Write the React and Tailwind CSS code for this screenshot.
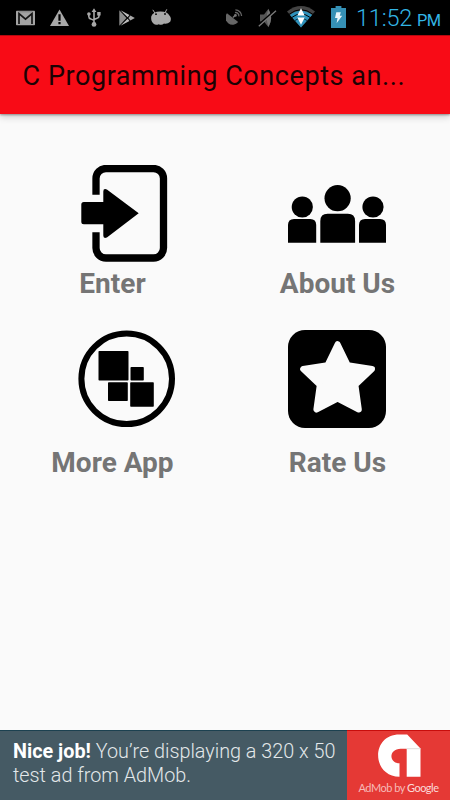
const MENU_ROWS = [
  [
    { label: 'Enter', Icon: EnterIcon, iconClass: 'ml-[27px]' },
    { label: 'About Us', Icon: PeopleIcon, iconClass: 'mr-px' },
  ],
  [
    { label: 'More App', Icon: MoreIcon, iconClass: 'ml-[27px]' },
    { label: 'Rate Us', Icon: RateIcon, iconClass: 'mr-px' },
  ],
]

function EnterIcon() {
  return (
    <svg width="98" height="98" viewBox="0 0 98 98">
      <path
        d="M19 29.7V13.5a10 10 0 0 1 10-10h47.5a10 10 0 0 1 10 10V83a10 10 0 0 1-10 10H29a10 10 0 0 1-10-10V67.3"
        fill="none"
        stroke="#000"
        strokeWidth="7.3"
      />
      <path d="M6.8 37H26.3V26.5q0-3.4 3.6-2L61.7 48.3 29.9 72.5q-3.6 1.6-3.6-2V59.3H6.8q-2.5 0-2.5-2.5V39.5q0-2.5 2.5-2.5z" />
    </svg>
  )
}

function PeopleIcon() {
  return (
    <svg width="98" height="98" viewBox="0 0 98 98">
      <circle cx="14.3" cy="42" r="10.6" />
      <circle cx="49.6" cy="33.2" r="13.1" />
      <circle cx="85" cy="42" r="10.6" />
      <path d="M0 77.7V60q0-6 6-6h16.2q6 0 6 6v17.7z" />
      <path d="M32.3 77.7V56q0-7.3 7.3-7.3h20.2q7.3 0 7.3 7.3v21.7z" />
      <path d="M71 77.7V60q0-6 6-6h15q6 0 6 6v17.7z" />
    </svg>
  )
}

function MoreIcon() {
  return (
    <svg width="98" height="98" viewBox="0 0 98 98">
      <circle cx="49.7" cy="48.8" r="45.3" fill="none" stroke="#000" strokeWidth="6" />
      <rect x="21.5" y="21" width="30" height="29.5" rx="0.8" />
      <rect x="53.5" y="37.1" width="13.3" height="13.4" rx="0.8" />
      <rect x="31" y="52.3" width="19.8" height="18.8" rx="0.8" />
      <rect x="53.2" y="52.3" width="23.6" height="24.4" rx="0.8" />
    </svg>
  )
}

function RateIcon() {
  return (
    <svg width="98" height="98" viewBox="0 0 98 98">
      <rect width="98" height="98" rx="17" />
      <path
        d="M49.6 14.2 59.8 35.3 84 39 67.4 54.8 70.8 79.5 49.6 68.6 28.4 79.5 31.8 54.8 15.2 39 39.4 35.3z"
        fill="#fafafa"
        stroke="#fafafa"
        strokeWidth="6"
        strokeLinejoin="round"
      />
    </svg>
  )
}

function NotificationIcons() {
  return (
    <div className="flex items-center gap-[15px] pl-4">
      <svg width="19" height="16" viewBox="0 0 19 16">
        <rect y="0.7" width="19" height="14.6" rx="0.8" fill="#a3a3a3" />
        <path d="M3 14V3.6l6.5 5.6L16 3.6V14" fill="none" stroke="#141414" strokeWidth="1.7" />
        <path d="M2.5 1.8h14" stroke="#777" strokeWidth="0.8" />
      </svg>
      <svg width="19" height="18" viewBox="0 0 19 18">
        <path d="M9.5 0.6 19 17H0z" fill="#a8a8a8" />
        <path d="M9.5 5.3v6.5M9.5 13v2.3" stroke="#000" strokeWidth="2.2" />
      </svg>
      <svg width="14" height="19" viewBox="0 0 14 19" className="ml-[3px]">
        <path
          d="M7 3v13M1.8 5.5v3q0 2 2 2.4L7 12.4M12 5.5v2.4q0 2-2 2.4L7 11.5"
          fill="none"
          stroke="#a8a8a8"
          strokeWidth="1.6"
        />
        <path d="M7 0.2 9.4 4H4.6zM10.2 4h3.4v3.4h-3.4z" fill="#a8a8a8" />
        <circle cx="1.9" cy="6" r="1.8" fill="#a8a8a8" />
        <circle cx="7" cy="16.4" r="2.4" fill="#a8a8a8" />
      </svg>
      <svg width="16" height="16" viewBox="0 0 16 16" className="ml-[3px]">
        <path d="M0.3 0.2V15.8L7.5 8z" fill="#8e8e8e" />
        <path d="M1.5 0.3 10.5 5 8.6 7.2zM1.5 15.7 10.5 11 8.6 8.8z" fill="#bcbcbc" />
        <path d="M11.4 5.5 15.8 8l-4.4 2.6L9.4 8z" fill="#a8a8a8" />
      </svg>
      <svg width="22" height="17" viewBox="0 0 22 17">
        <path d="M2.8 0.8 5 4.2M16.8 0.3 15 3.8" stroke="#a8a8a8" strokeWidth="1" />
        <path
          d="M1.3 7.2Q3 2.6 10 2.4 17.6 2.2 19.2 6.3 22 9.3 20.2 12.7 17.3 15.5 14 14.6 11.8 16.6 8.7 15.2 5.7 16.8 3.4 14.6 0.4 11.6 1.3 7.2z"
          fill="#a8a8a8"
        />
        <circle cx="6" cy="5.2" r="0.9" />
        <circle cx="15" cy="5" r="0.9" />
      </svg>
    </div>
  )
}

function SystemIcons() {
  return (
    <div className="flex items-center">
      <svg width="17" height="17" viewBox="0 0 17 17" className="mt-px mr-[15px]">
        <path d="M1 4.2 12.2 13A7 7 0 0 1 1 4.2z" fill="#666" />
        <path d="M7 8.5 9 6.5" stroke="#777" strokeWidth="1.4" />
        <circle cx="9.4" cy="6.4" r="1.4" fill="#777" />
        <path d="M9 3.6a3.2 3.2 0 0 1 3.8 3.8M9.4 0.9a6.2 6.2 0 0 1 6.2 6.2" fill="none" stroke="#666" strokeWidth="1.3" />
      </svg>
      <svg width="19" height="20" viewBox="0 0 19 20" className="mt-px mr-[10px]">
        <path d="M2 6.5h4L10.5 0.7q4.6 9.3 0 18.6L6 13.5H2z" fill="#555" />
        <path d="M10.5 1.2q5.4 8.8 0 17.6-3.6-8.8 0-17.6z" fill="#757575" />
        <path d="M0.5 17.2 17.6 1.8" stroke="#000" strokeWidth="2" />
        <path d="M0.8 18.2 18 2.8" stroke="#7b7b7b" strokeWidth="1.3" />
      </svg>
      <svg width="28" height="22" viewBox="0 0 28 22" className="mr-4">
        <path d="M14 21.5 0 5.5Q14-5.3 28 5.5z" fill="#444" />
        <path d="M14 21.5 2.9 8.9Q14 0.6 25.1 8.9z" fill="#2d91bb" />
        <path d="M2.2 8.2Q14-0.8 25.8 8.2M4.8 11.5Q14 4.4 23.2 11.5" fill="none" stroke="#000" strokeWidth="1" />
        <path d="M7.8 14.6Q14 10 20.2 14.6" fill="none" stroke="#05303f" strokeWidth="1" />
        <path d="M14 2.2 17.7 9.4H10.3zM10.3 11.5h7.4L14 18.7z" fill="#fff" />
      </svg>
      <svg width="15" height="22" viewBox="0 0 15 22" className="mr-[10px]">
        <path d="M4.6 0h5.8v2H15v20H0V2h4.6z" fill="#3590b5" />
        <path d="M5.3 6.2h4.5L8.8 9.8h2.4L5.6 17.2l.9-5.1H4z" fill="#e8f5fa" />
      </svg>
    </div>
  )
}

function StatusBar() {
  return (
    <div className="flex h-[35px] items-center justify-between bg-black pr-[9px]">
      <NotificationIcons />
      <div className="flex items-center">
        <SystemIcons />
        <div className="flex items-baseline pt-1 whitespace-nowrap text-[#33b5e5]">
          <span className="w-[61px] text-[23.5px] leading-[27px] font-light tracking-[-0.2px]">11:52</span>
          <span className="w-6 text-[16.4px] tracking-[-0.5px]">PM</span>
        </div>
      </div>
    </div>
  )
}

function MenuItem({ label, Icon, iconClass }) {
  return (
    <button type="button" className="flex w-[225px] flex-col items-center gap-1">
      <span className={iconClass}>
        <Icon />
      </span>
      <span className="text-[28px] leading-[33px] font-bold whitespace-nowrap text-[#757575]">{label}</span>
    </button>
  )
}

function AdBanner() {
  return (
    <div className="flex h-[70px]">
      <div className="w-[347px] border-t border-[#1c4150] bg-[#455a64] pt-[9px] pl-[13px] text-[19.8px] leading-[23.5px] font-light whitespace-nowrap text-[#e3e8ea]">
        <p>
          <b className="font-bold text-white">Nice job!</b> You’re displaying a 320 x 50
        </p>
        <p>test ad from AdMob.</p>
      </div>
      <div className="flex flex-1 flex-col items-center border-t border-[#c80d0b] bg-[#e53935] pt-[3px]">
        <svg width="43" height="43" viewBox="0 0 43 43" className="ml-px">
          <path
            d="M29.2 0.5 42.5 14.5V42.7H28.7V14.7H23C10.5 14.5 10.5 29.3 21.5 29.3V42.7C-6.5 42.7-7.5 0.5 21.5 0.5z"
            fill="#fff"
          />
          <path d="M28.7 14.7H42.5" stroke="#dedede" strokeWidth="1" />
        </svg>
        <span className="mt-[2px] font-[Lato,sans-serif] text-[11px] leading-[18px] tracking-[-0.5px] whitespace-nowrap text-[#f6b9b7]">
          AdMob by <span className="text-[#fbdad9]">Google</span>
        </span>
      </div>
    </div>
  )
}

export default function App() {
  return (
    <div className="flex h-[800px] w-[450px] flex-col overflow-hidden bg-[#fafafa] font-[Roboto,sans-serif]">
      <StatusBar />
      <header className="flex h-[79px] shrink-0 items-center border-t border-[#b5080f] bg-[#f80b16] pl-[22.5px] shadow-[0_1px_2px_rgba(0,0,0,0.35),0_3px_7px_rgba(0,0,0,0.18)]">
        <h1 className="mt-[3px] text-[27px] tracking-[0.57px] whitespace-nowrap text-[#1d0204]">
          C Programming Concepts an...
        </h1>
      </header>
      <main className="flex-1 pt-[51px]">
        <div className="mb-[30px] flex h-[135px]">
          {MENU_ROWS[0].map((item) => (
            <MenuItem key={item.label} {...item} />
          ))}
        </div>
        <div className="flex [&_button]:gap-[18px]">
          {MENU_ROWS[1].map((item) => (
            <MenuItem key={item.label} {...item} />
          ))}
        </div>
      </main>
      <AdBanner />
    </div>
  )
}
